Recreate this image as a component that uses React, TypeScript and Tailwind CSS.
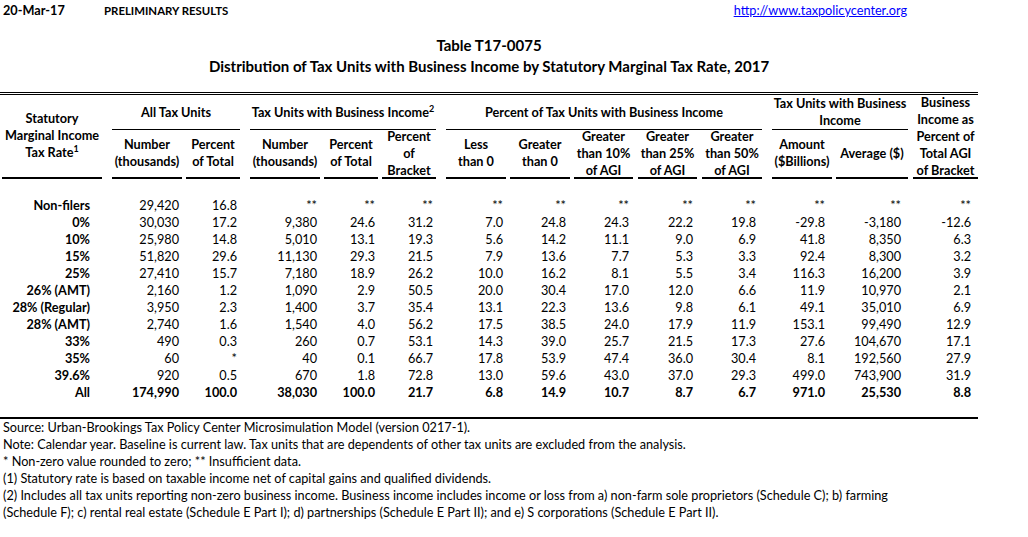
import React from 'react';

// column geometry: left gap (margin) and right padding for the numbers
const cols = [
  { ml: 'ml-[2px]', pr: 'pr-[12px]' },
  { ml: 'ml-[10px]', pr: 'pr-[3px]' },
  { ml: 'ml-[4px]', pr: 'pr-[3px]' },
  { ml: 'ml-[10px]', pr: 'pr-[3px]' },
  { ml: 'ml-[4px]', pr: 'pr-[3px]' },
  { ml: 'ml-[4px]', pr: 'pr-[3px]' },
  { ml: 'ml-[10px]', pr: 'pr-[3px]' },
  { ml: 'ml-[4px]', pr: 'pr-[4px]' },
  { ml: 'ml-[4px]', pr: 'pr-[4px]' },
  { ml: 'ml-[5px]', pr: 'pr-[4px]' },
  { ml: 'ml-[5px]', pr: 'pr-[6px]' },
  { ml: 'ml-[10px]', pr: 'pr-[7px]' },
  { ml: 'ml-[4px]', pr: 'pr-[7px]' },
  { ml: 'ml-[5px]', pr: 'pr-[7px]' },
];

const gridCols =
  'grid grid-cols-[102px_80px_58px_80px_58px_58px_70px_64px_63px_64px_65px_70px_76px_70px] w-[978px]';

const NA = Array(11).fill('**');

const rows: { label: string; values: string[]; bold?: boolean }[] = [
  { label: 'Non-filers', values: ['29,420', '16.8', ...NA] },
  { label: '0%', values: ['30,030', '17.2', '9,380', '24.6', '31.2', '7.0', '24.8', '24.3', '22.2', '19.8', '-29.8', '-3,180', '-12.6'] },
  { label: '10%', values: ['25,980', '14.8', '5,010', '13.1', '19.3', '5.6', '14.2', '11.1', '9.0', '6.9', '41.8', '8,350', '6.3'] },
  { label: '15%', values: ['51,820', '29.6', '11,130', '29.3', '21.5', '7.9', '13.6', '7.7', '5.3', '3.3', '92.4', '8,300', '3.2'] },
  { label: '25%', values: ['27,410', '15.7', '7,180', '18.9', '26.2', '10.0', '16.2', '8.1', '5.5', '3.4', '116.3', '16,200', '3.9'] },
  { label: '26% (AMT)', values: ['2,160', '1.2', '1,090', '2.9', '50.5', '20.0', '30.4', '17.0', '12.0', '6.6', '11.9', '10,970', '2.1'] },
  { label: '28% (Regular)', values: ['3,950', '2.3', '1,400', '3.7', '35.4', '13.1', '22.3', '13.6', '9.8', '6.1', '49.1', '35,010', '6.9'] },
  { label: '28% (AMT)', values: ['2,740', '1.6', '1,540', '4.0', '56.2', '17.5', '38.5', '24.0', '17.9', '11.9', '153.1', '99,490', '12.9'] },
  { label: '33%', values: ['490', '0.3', '260', '0.7', '53.1', '14.3', '39.0', '25.7', '21.5', '17.3', '27.6', '104,670', '17.1'] },
  { label: '35%', values: ['60', '*', '40', '0.1', '66.7', '17.8', '53.9', '47.4', '36.0', '30.4', '8.1', '192,560', '27.9'] },
  { label: '39.6%', values: ['920', '0.5', '670', '1.8', '72.8', '13.0', '59.6', '43.0', '37.0', '29.3', '499.0', '743,900', '31.9'] },
  { label: 'All', values: ['174,990', '100.0', '38,030', '100.0', '21.7', '6.8', '14.9', '10.7', '8.7', '6.7', '971.0', '25,530', '8.8'], bold: true },
];

const subHeads: string[][] = [
  ['Number', '(thousands)'],
  ['Percent', 'of Total'],
  ['Number', '(thousands)'],
  ['Percent', 'of Total'],
  ['Percent', 'of', 'Bracket'],
  ['Less', 'than 0'],
  ['Greater', 'than 0'],
  ['Greater', 'than 10%', 'of AGI'],
  ['Greater', 'than 25%', 'of AGI'],
  ['Greater', 'than 50%', 'of AGI'],
  ['Amount', '($Billions)'],
  ['Average ($)'],
];

const notes = [
  'Source: Urban-Brookings Tax Policy Center Microsimulation Model (version 0217-1).',
  'Note: Calendar year. Baseline is current law. Tax units that are dependents of other tax units are excluded from the analysis.',
  '* Non-zero value rounded to zero; ** Insufficient data.',
  '(1) Statutory rate is based on taxable income net of capital gains and qualified dividends.',
  '(2) Includes all tax units reporting non-zero business income. Business income includes income or loss from a) non-farm sole proprietors (Schedule C); b) farming',
  '(Schedule F); c) rental real estate (Schedule E Part I); d) partnerships (Schedule E Part II); and e) S corporations (Schedule E Part II).',
];

function Lines({ lines }: { lines: string[] }) {
  return (
    <div className="flex flex-col items-center">
      {lines.map((l) => (
        <span key={l} className="whitespace-nowrap">
          {l}
        </span>
      ))}
    </div>
  );
}

export default function App() {
  return (
    <div className="w-[1028px] h-[537px] overflow-hidden bg-white text-black font-['Lato',sans-serif] text-[12.7px] leading-[17px]">
      {/* top bar */}
      <div className="h-[20px] flex items-center font-bold">
        <span className="ml-[3px] w-[101px]">20-Mar-17</span>
        <span className="text-[11.4px]">PRELIMINARY RESULTS</span>
        <span className="ml-auto mr-[121px] font-normal text-[#0000ff] underline">http://www.taxpolicycenter.org</span>
      </div>

      {/* title */}
      <div className="w-[978px] pt-[14px] flex flex-col items-center font-bold text-[15px]">
        <div className="h-[22px] leading-[22px]">Table T17-0075</div>
        <div className="h-[21px] leading-[21px]">
          Distribution of Tax Units with Business Income by Statutory Marginal Tax Rate, 2017
        </div>
      </div>

      <div className="mt-[15px] w-[978px] border-t-[3px] border-double border-black" />

      {/* header */}
      <div className={`${gridCols} grid-rows-[35px_49px] font-bold`}>
        <div className={`row-span-2 ${cols[0].ml} border-b-2 border-black flex items-center justify-center pb-[2px]`}>
          <div className="flex flex-col items-center">
            <span>Statutory</span>
            <span className="whitespace-nowrap">Marginal Income</span>
            <span>
              Tax Rate<sup className="text-[9px]">1</sup>
            </span>
          </div>
        </div>
        <div className={`col-span-2 ${cols[1].ml} border-b border-black flex items-center justify-center`}>
          All Tax Units
        </div>
        <div className={`col-span-3 ${cols[3].ml} border-b border-black flex items-center justify-center`}>
          <span className="whitespace-nowrap">
            Tax Units with Business Income<sup className="text-[9px]">2</sup>
          </span>
        </div>
        <div className={`col-span-5 ${cols[6].ml} border-b border-black flex items-center justify-center`}>
          Percent of Tax Units with Business Income
        </div>
        <div className={`col-span-2 ${cols[11].ml} border-b border-black flex items-center justify-center`}>
          <Lines lines={['Tax Units with Business', 'Income']} />
        </div>
        <div className={`row-span-2 ${cols[13].ml} border-b-2 border-black flex items-center justify-center`}>
          <Lines lines={['Business', 'Income as', 'Percent of', 'Total AGI', 'of Bracket']} />
        </div>
        {subHeads.map((h, i) => (
          <div
            key={i}
            className={`${cols[i + 1].ml} border-b-2 border-black flex items-center justify-center pb-[1px]`}
          >
            <Lines lines={h} />
          </div>
        ))}
      </div>

      {/* body */}
      <div className="pt-[18px] pb-[16px]">
        {rows.map((r) => (
          <div key={r.label} className={`${gridCols} h-[17px] ${r.bold ? 'font-bold' : ''}`}>
            <div className={`${cols[0].ml} ${cols[0].pr} text-right font-bold whitespace-nowrap`}>{r.label}</div>
            {r.values.map((v, i) => (
              <div key={i} className={`${cols[i + 1].ml} ${cols[i + 1].pr} text-right whitespace-nowrap`}>
                {v}
              </div>
            ))}
          </div>
        ))}
      </div>

      {/* footnotes */}
      <div className="w-[978px] border-t-2 border-black pl-[3px]">
        {notes.map((n) => (
          <div key={n} className="h-[17px] whitespace-nowrap">
            {n}
          </div>
        ))}
      </div>
    </div>
  );
}
